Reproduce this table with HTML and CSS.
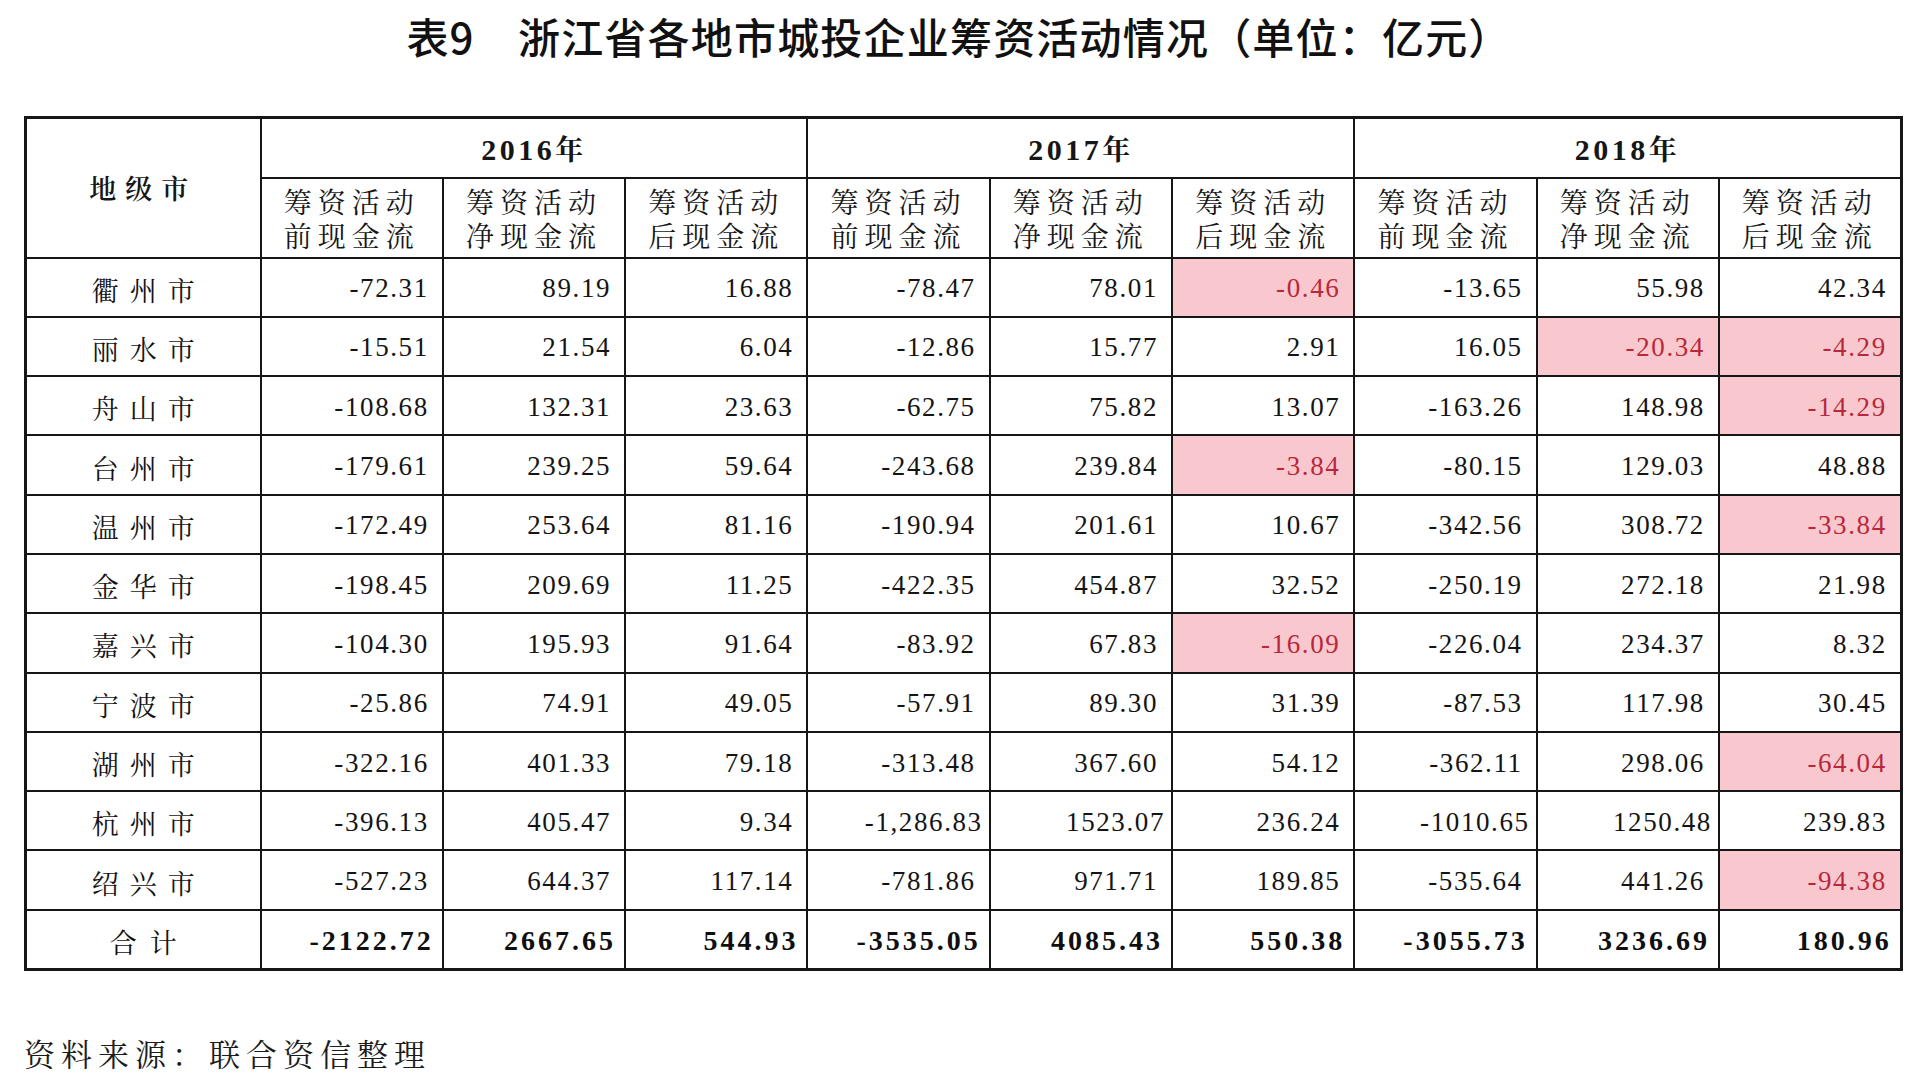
FILE: index.html
```html
<!DOCTYPE html>
<html lang="zh-CN">
<head>
<meta charset="utf-8">
<title>表9 浙江省各地市城投企业筹资活动情况</title>
<link rel="stylesheet" href="styles.css">
</head>
<body>
<div class="page">
  <h1 class="title">表9　浙江省各地市城投企业筹资活动情况（单位：亿元）</h1>
  <table class="data">
    <colgroup>
      <col class="c-city">
      <col class="c-num"><col class="c-num"><col class="c-num">
      <col class="c-num"><col class="c-num"><col class="c-num">
      <col class="c-num"><col class="c-num"><col class="c-num">
    </colgroup>
    <thead>
      <tr class="r-year">
        <th rowspan="2" class="h-city">地级市</th>
        <th colspan="3" class="h-year">2016<span class="cjk">年</span></th>
        <th colspan="3" class="h-year">2017<span class="cjk">年</span></th>
        <th colspan="3" class="h-year">2018<span class="cjk">年</span></th>
      </tr>
      <tr class="r-sub">
        <th class="h-sub"><span class="ln">筹资活动</span><span class="ln">前现金流</span></th>
        <th class="h-sub"><span class="ln">筹资活动</span><span class="ln">净现金流</span></th>
        <th class="h-sub"><span class="ln">筹资活动</span><span class="ln">后现金流</span></th>
        <th class="h-sub"><span class="ln">筹资活动</span><span class="ln">前现金流</span></th>
        <th class="h-sub"><span class="ln">筹资活动</span><span class="ln">净现金流</span></th>
        <th class="h-sub"><span class="ln">筹资活动</span><span class="ln">后现金流</span></th>
        <th class="h-sub"><span class="ln">筹资活动</span><span class="ln">前现金流</span></th>
        <th class="h-sub"><span class="ln">筹资活动</span><span class="ln">净现金流</span></th>
        <th class="h-sub"><span class="ln">筹资活动</span><span class="ln">后现金流</span></th>
      </tr>
    </thead>
    <tbody>
      <tr><td class="city">衢州市</td><td>-72.31</td><td>89.19</td><td>16.88</td><td>-78.47</td><td>78.01</td><td class="neg">-0.46</td><td>-13.65</td><td>55.98</td><td>42.34</td></tr>
      <tr><td class="city">丽水市</td><td>-15.51</td><td>21.54</td><td>6.04</td><td>-12.86</td><td>15.77</td><td>2.91</td><td>16.05</td><td class="neg">-20.34</td><td class="neg">-4.29</td></tr>
      <tr><td class="city">舟山市</td><td>-108.68</td><td>132.31</td><td>23.63</td><td>-62.75</td><td>75.82</td><td>13.07</td><td>-163.26</td><td>148.98</td><td class="neg">-14.29</td></tr>
      <tr><td class="city">台州市</td><td>-179.61</td><td>239.25</td><td>59.64</td><td>-243.68</td><td>239.84</td><td class="neg">-3.84</td><td>-80.15</td><td>129.03</td><td>48.88</td></tr>
      <tr><td class="city">温州市</td><td>-172.49</td><td>253.64</td><td>81.16</td><td>-190.94</td><td>201.61</td><td>10.67</td><td>-342.56</td><td>308.72</td><td class="neg">-33.84</td></tr>
      <tr><td class="city">金华市</td><td>-198.45</td><td>209.69</td><td>11.25</td><td>-422.35</td><td>454.87</td><td>32.52</td><td>-250.19</td><td>272.18</td><td>21.98</td></tr>
      <tr><td class="city">嘉兴市</td><td>-104.30</td><td>195.93</td><td>91.64</td><td>-83.92</td><td>67.83</td><td class="neg">-16.09</td><td>-226.04</td><td>234.37</td><td>8.32</td></tr>
      <tr><td class="city">宁波市</td><td>-25.86</td><td>74.91</td><td>49.05</td><td>-57.91</td><td>89.30</td><td>31.39</td><td>-87.53</td><td>117.98</td><td>30.45</td></tr>
      <tr><td class="city">湖州市</td><td>-322.16</td><td>401.33</td><td>79.18</td><td>-313.48</td><td>367.60</td><td>54.12</td><td>-362.11</td><td>298.06</td><td class="neg">-64.04</td></tr>
      <tr><td class="city">杭州市</td><td>-396.13</td><td>405.47</td><td>9.34</td><td class="tight">-1,286.83</td><td class="tight">1523.07</td><td>236.24</td><td class="tight">-1010.65</td><td class="tight">1250.48</td><td>239.83</td></tr>
      <tr><td class="city">绍兴市</td><td>-527.23</td><td>644.37</td><td>117.14</td><td>-781.86</td><td>971.71</td><td>189.85</td><td>-535.64</td><td>441.26</td><td class="neg">-94.38</td></tr>
      <tr class="total"><td class="city city-total">合计</td><td>-2122.72</td><td>2667.65</td><td>544.93</td><td>-3535.05</td><td>4085.43</td><td>550.38</td><td>-3055.73</td><td>3236.69</td><td>180.96</td></tr>
    </tbody>
  </table>
  <p class="source">资料来源：联合资信整理</p>
</div>
</body>
</html>
```
FILE: styles.css
```css
html, body {
  margin: 0;
  padding: 0;
  background: #ffffff;
}

.page {
  width: 1920px;
  box-sizing: border-box;
  padding: 11px 20px 0 24px;
  color: #161616;
}

.title {
  margin: 0 0 55px;
  padding-right: 6px;
  font-family: "Noto Sans CJK SC", "Noto Sans", sans-serif;
  font-size: 42px;
  line-height: 50px;
  font-weight: 500;
  letter-spacing: 1.2px;
  text-align: center;
  color: #111111;
}

.data {
  width: 1876px;
  table-layout: fixed;
  border-collapse: collapse;
  border: 3px solid #161616;
}

.c-city { width: 235px; }
.c-num { width: 182.3px; }

.data th,
.data td {
  border: 2px solid #161616;
  padding: 0;
}

.r-year { height: 60px; }
.r-sub { height: 80px; }
.data tbody tr { height: 59.3px; }
.data tbody tr.total { height: 60px; }

.h-city {
  font-family: "Noto Serif CJK SC", "Noto Sans CJK SC", serif;
  font-size: 27px;
  font-weight: 600;
  letter-spacing: 9px;
  padding-left: 9px;
  text-align: center;
  vertical-align: middle;
}

.h-year {
  font-family: "Liberation Serif", "Times New Roman", serif;
  font-size: 30px;
  font-weight: 700;
  letter-spacing: 3.5px;
  text-align: center;
  vertical-align: middle;
}

.h-year .cjk {
  font-family: "Noto Serif CJK SC", "Noto Sans CJK SC", serif;
  font-size: 28px;
  font-weight: 700;
}

.h-sub {
  font-family: "Noto Serif CJK SC", "Noto Sans CJK SC", serif;
  font-size: 28px;
  line-height: 34px;
  font-weight: 400;
  letter-spacing: 6px;
  padding-left: 6px;
  text-align: center;
  vertical-align: middle;
  padding-top: 2px;
}

.h-sub .ln {
  display: block;
}

.data td {
  font-family: "Liberation Serif", "Times New Roman", serif;
  font-size: 27px;
  letter-spacing: 1.6px;
  text-align: right;
  vertical-align: middle;
  padding-right: 13px;
  padding-top: 3px;
  color: #141414;
}

.data td.city {
  font-family: "Noto Serif CJK SC", "Noto Sans CJK SC", serif;
  font-size: 27px;
  letter-spacing: 11px;
  padding-left: 11px;
  padding-right: 0;
  padding-top: 4px;
  text-align: center;
}

.data td.city-total {
  letter-spacing: 13px;
  padding-left: 13px;
}

.data td.neg {
  background: #f9c8cf;
  color: #b8283a;
}

.data td.tight {
  padding-right: 6px;
}

.total td {
  font-weight: 700;
  font-size: 28px;
  letter-spacing: 3px;
  padding-right: 8px;
  color: #0f0f0f;
}

.total td.city {
  font-weight: 400;
}

.source {
  margin: 62px 0 0 0;
  font-family: "Noto Serif CJK SC", "Noto Sans CJK SC", serif;
  font-size: 31px;
  line-height: 40px;
  letter-spacing: 6px;
  color: #1c1c1c;
}
```
